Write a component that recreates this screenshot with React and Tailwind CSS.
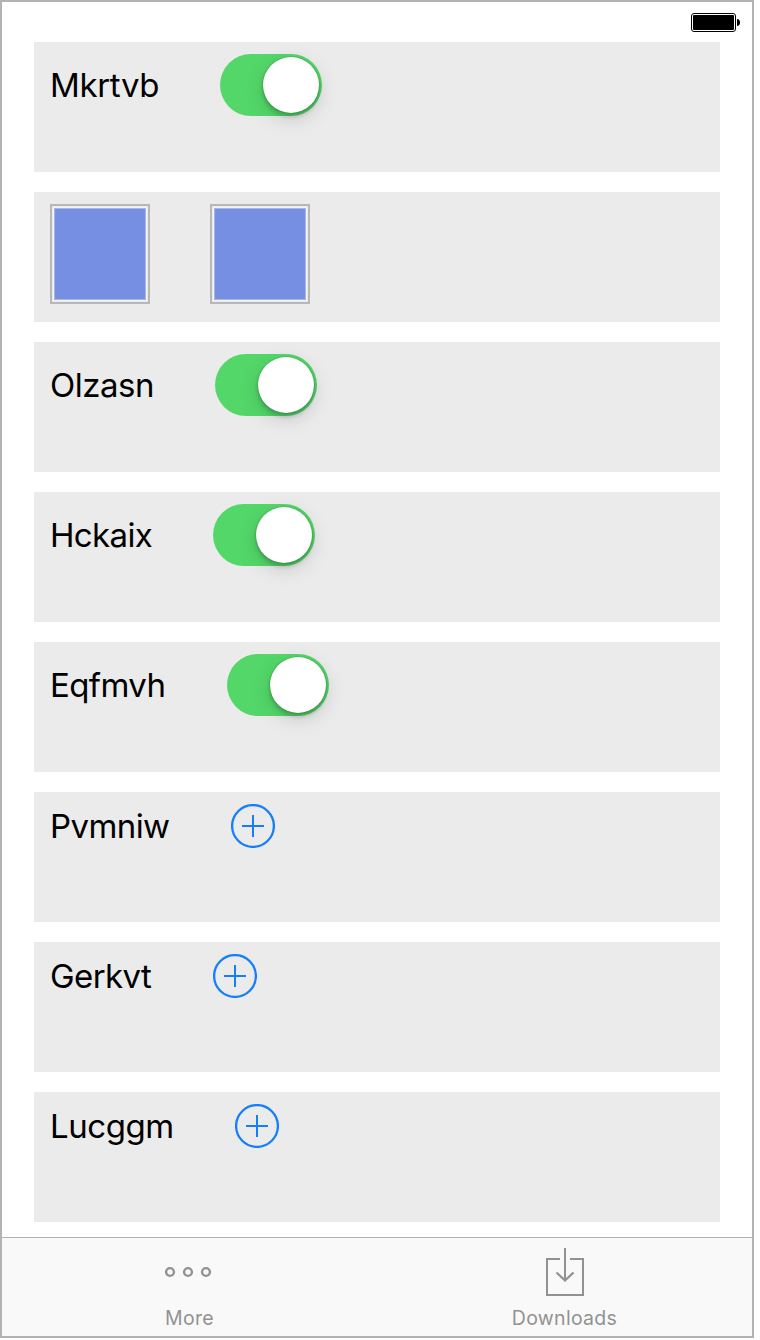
const rows = [
  { label: 'Mkrtvb', kind: 'switch', width: 'w-[110px]', tracking: 'tracking-[-0.35px]' },
  { kind: 'swatches' },
  { label: 'Olzasn', kind: 'switch', width: 'w-[105px]', tracking: 'tracking-[-0.5px]' },
  { label: 'Hckaix', kind: 'switch', width: 'w-[103px]', tracking: 'tracking-[-0.65px]' },
  { label: 'Eqfmvh', kind: 'switch', width: 'w-[117px]', tracking: 'tracking-[-0.6px]' },
  { label: 'Pvmniw', kind: 'add', width: 'w-[121px]', tracking: 'tracking-[-0.6px]' },
  { label: 'Gerkvt', kind: 'add', width: 'w-[103px]', tracking: 'tracking-[-0.6px]' },
  { label: 'Lucggm', kind: 'add', width: 'w-[125px]', tracking: 'tracking-[-0.45px]' },
];

function Switch() {
  return (
    <button className="flex h-[62px] w-[102px] shrink-0 items-center justify-end rounded-full bg-[#53d769] pr-[3px]">
      <span className="size-14 rounded-full bg-white shadow-[0_6px_20px_rgba(0,0,0,0.15),0_4px_4px_rgba(0,0,0,0.16),0_0_2px_rgba(0,0,0,0.3)]" />
    </button>
  );
}

function AddButton() {
  return (
    <button className="size-11 shrink-0">
      <svg viewBox="0 0 44 44" className="size-11" fill="none" stroke="#147efb" strokeWidth="2">
        <circle cx="22" cy="22" r="20.9" strokeWidth="2.3" />
        <path d="M11 22H33M22 11V33" />
      </svg>
    </button>
  );
}

function Swatch() {
  return (
    <div className="size-[100px] border-2 border-[#b8b8b8] p-px">
      <div className="size-full border border-[#f3f5fb] bg-[#a6b6ec] p-px">
        <div className="size-full bg-[#768fe2]" />
      </div>
    </div>
  );
}

function Row({ row }) {
  return (
    <div className="flex h-[130px] items-start gap-[60px] bg-[#ebebeb] px-4 pt-3">
      {row.kind === 'swatches' ? (
        <>
          <Swatch />
          <Swatch />
        </>
      ) : (
        <>
          <div
            className={`flex shrink-0 items-center whitespace-nowrap text-[33px] leading-10 text-black ${row.width} ${row.tracking} ${
              row.kind === 'switch' ? 'h-[62px]' : 'h-11'
            }`}
          >
            {row.label}
          </div>
          {row.kind === 'switch' ? <Switch /> : <AddButton />}
        </>
      )}
    </div>
  );
}

function Battery() {
  return (
    <svg viewBox="0 0 50 20" className="h-5 w-[50px]">
      <rect x="0.5" y="0.5" width="44" height="18" rx="2.5" fill="none" stroke="#000" />
      <rect x="2" y="2" width="41" height="15" rx="1" fill="#000" />
      <path d="M46 6C48 6 49 7.5 49 9.5S48 13 46 13Z" fill="#000" />
    </svg>
  );
}

export default function App() {
  return (
    <div className="h-[1340px] w-[760px] bg-white font-['Inter','Liberation_Sans',sans-serif]">
      <div className="flex h-[1338px] w-[754px] flex-col border-2 border-[#b3b3b3] bg-white">
        <header className="flex h-10 shrink-0 justify-end pt-[11px] pr-[11px]">
          <Battery />
        </header>
        <main className="flex grow flex-col gap-5 px-8">
          {rows.map((row, i) => (
            <Row key={i} row={row} />
          ))}
        </main>
        <nav className="flex h-[99px] shrink-0 border-t border-[#b2b2b2] bg-[#f9f9f9] text-[19.5px] leading-6 text-[#929292]">
          <div className="flex w-[374px] flex-col items-center pt-2.5">
            <svg viewBox="0 0 48 48" className="size-12" fill="none" stroke="#929292" strokeWidth="2.4">
              <circle cx="5" cy="24" r="3.9" />
              <circle cx="23" cy="24" r="3.9" />
              <circle cx="41" cy="24" r="3.9" />
            </svg>
            <span className="mt-2.5 pl-0.5 tracking-[0.3px]">More</span>
          </div>
          <div className="flex w-[378px] flex-col items-center pt-2.5 pl-0.5">
            <svg viewBox="0 0 48 48" className="size-12" fill="none" stroke="#929292" strokeWidth="2">
              <path d="M19 11H6V47H42V11H29M24 0V32" />
              <path d="M15.5 24.5L24 32.5L32.5 24.5" strokeWidth="2.3" />
            </svg>
            <span className="mt-2.5 tracking-[0.3px]">Downloads</span>
          </div>
        </nav>
      </div>
    </div>
  );
}
